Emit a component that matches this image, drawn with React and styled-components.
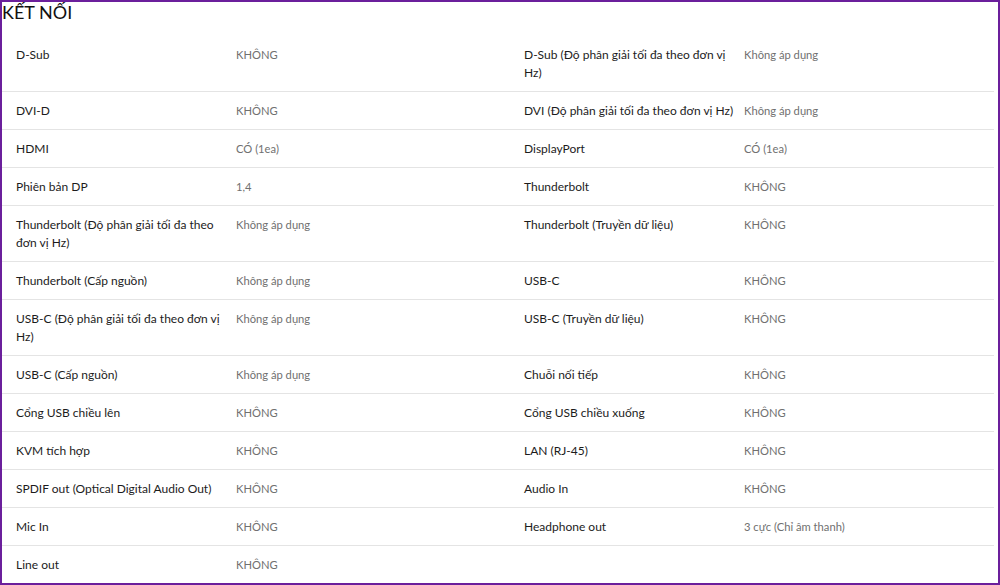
import React from 'react'
import styled, { createGlobalStyle } from 'styled-components'

const rows = [
  ['D-Sub', 'KHÔNG', 'D-Sub (Độ phân giải tối đa theo đơn vị Hz)', 'Không áp dụng'],
  ['DVI-D', 'KHÔNG', 'DVI (Độ phân giải tối đa theo đơn vị Hz)', 'Không áp dụng'],
  ['HDMI', 'CÓ (1ea)', 'DisplayPort', 'CÓ (1ea)'],
  ['Phiên bản DP', '1,4', 'Thunderbolt', 'KHÔNG'],
  ['Thunderbolt (Độ phân giải tối đa theo đơn vị Hz)', 'Không áp dụng', 'Thunderbolt (Truyền dữ liệu)', 'KHÔNG'],
  ['Thunderbolt (Cấp nguồn)', 'Không áp dụng', 'USB-C', 'KHÔNG'],
  ['USB-C (Độ phân giải tối đa theo đơn vị Hz)', 'Không áp dụng', 'USB-C (Truyền dữ liệu)', 'KHÔNG'],
  ['USB-C (Cấp nguồn)', 'Không áp dụng', 'Chuỗi nối tiếp', 'KHÔNG'],
  ['Cổng USB chiều lên', 'KHÔNG', 'Cổng USB chiều xuống', 'KHÔNG'],
  ['KVM tích hợp', 'KHÔNG', 'LAN (RJ-45)', 'KHÔNG'],
  ['SPDIF out (Optical Digital Audio Out)', 'KHÔNG', 'Audio In', 'KHÔNG'],
  ['Mic In', 'KHÔNG', 'Headphone out', '3 cực (Chỉ âm thanh)'],
  ['Line out', 'KHÔNG'],
]

function App() {
  return (
    <>
      <GlobalStyle />
      <Frame>
        <Title>KẾT NỐI</Title>
        <SpecList>
          {rows.map((r, i) => (
            <SpecRow key={i} $last={i === rows.length - 1}>
              <Label>{r[0]}</Label>
              <Value>{r[1]}</Value>
              <Label>{r[2]}</Label>
              <Value>{r[3]}</Value>
            </SpecRow>
          ))}
        </SpecList>
      </Frame>
    </>
  )
}

export default App

const GlobalStyle = createGlobalStyle`
body {
  margin:0;
  background:#fff;
  font-family:Lato, "Open Sans", sans-serif;
}
`

const Frame = styled.div`
box-sizing:border-box;
width:1000px;
height:585px;
border:2px solid #6b1f9c;
overflow:hidden;
`

const Title = styled.h2`
margin:0;
padding-top:1px;
height:33px;
font-size:18px;
font-weight:400;
color:#111;
line-height:18px;
`

const SpecList = styled.div`
display:flex;
flex-direction:column;
margin-right:4px;
`

const SpecRow = styled.div`
display:grid;
grid-template-columns:220px 288px 220px 1fr;
padding:10px 0 9px 14px;
border-bottom:${p => (p.$last ? 'none' : '1px solid #e4e4e4')};
line-height:18px;
`

const Label = styled.div`
color:#1c1c1c;
font-size:12px;
padding-right:8px;
`

const Value = styled.div`
color:#707070;
font-size:11.2px;
`
